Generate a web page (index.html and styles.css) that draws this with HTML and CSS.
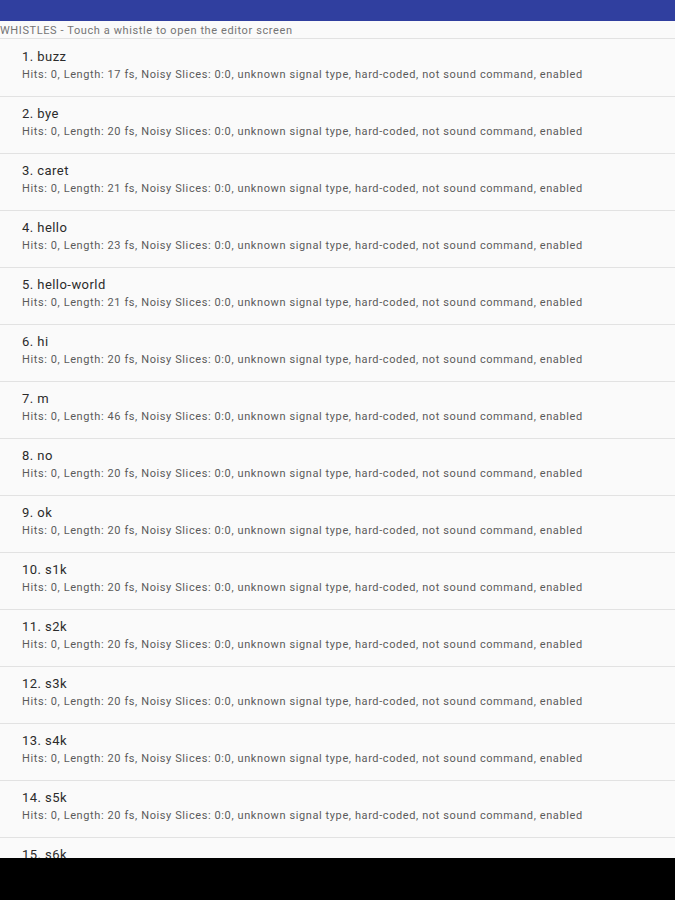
FILE: index.html
```html
<!DOCTYPE html>
<html lang="en">
<head>
    <meta charset="UTF-8">
    <meta name="viewport" content="width=device-width, initial-scale=1.0">
    <title>Whistles</title>
    <link rel="stylesheet" href="styles.css">
</head>
<body>
    <div class="screen">
        <div class="status-bar"></div>

        <div class="content">
            <div class="list-header">WHISTLES - Touch a whistle to open the editor screen</div>

            <ul class="whistle-list">
                <li class="whistle">
                    <div class="whistle-name">1. buzz</div>
                    <div class="whistle-info">Hits: 0, Length: 17 fs, Noisy Slices: 0:0, unknown signal type, hard-coded, not sound command, enabled</div>
                </li>
                <li class="whistle">
                    <div class="whistle-name">2. bye</div>
                    <div class="whistle-info">Hits: 0, Length: 20 fs, Noisy Slices: 0:0, unknown signal type, hard-coded, not sound command, enabled</div>
                </li>
                <li class="whistle">
                    <div class="whistle-name">3. caret</div>
                    <div class="whistle-info">Hits: 0, Length: 21 fs, Noisy Slices: 0:0, unknown signal type, hard-coded, not sound command, enabled</div>
                </li>
                <li class="whistle">
                    <div class="whistle-name">4. hello</div>
                    <div class="whistle-info">Hits: 0, Length: 23 fs, Noisy Slices: 0:0, unknown signal type, hard-coded, not sound command, enabled</div>
                </li>
                <li class="whistle">
                    <div class="whistle-name">5. hello-world</div>
                    <div class="whistle-info">Hits: 0, Length: 21 fs, Noisy Slices: 0:0, unknown signal type, hard-coded, not sound command, enabled</div>
                </li>
                <li class="whistle">
                    <div class="whistle-name">6. hi</div>
                    <div class="whistle-info">Hits: 0, Length: 20 fs, Noisy Slices: 0:0, unknown signal type, hard-coded, not sound command, enabled</div>
                </li>
                <li class="whistle">
                    <div class="whistle-name">7. m</div>
                    <div class="whistle-info">Hits: 0, Length: 46 fs, Noisy Slices: 0:0, unknown signal type, hard-coded, not sound command, enabled</div>
                </li>
                <li class="whistle">
                    <div class="whistle-name">8. no</div>
                    <div class="whistle-info">Hits: 0, Length: 20 fs, Noisy Slices: 0:0, unknown signal type, hard-coded, not sound command, enabled</div>
                </li>
                <li class="whistle">
                    <div class="whistle-name">9. ok</div>
                    <div class="whistle-info">Hits: 0, Length: 20 fs, Noisy Slices: 0:0, unknown signal type, hard-coded, not sound command, enabled</div>
                </li>
                <li class="whistle">
                    <div class="whistle-name">10. s1k</div>
                    <div class="whistle-info">Hits: 0, Length: 20 fs, Noisy Slices: 0:0, unknown signal type, hard-coded, not sound command, enabled</div>
                </li>
                <li class="whistle">
                    <div class="whistle-name">11. s2k</div>
                    <div class="whistle-info">Hits: 0, Length: 20 fs, Noisy Slices: 0:0, unknown signal type, hard-coded, not sound command, enabled</div>
                </li>
                <li class="whistle">
                    <div class="whistle-name">12. s3k</div>
                    <div class="whistle-info">Hits: 0, Length: 20 fs, Noisy Slices: 0:0, unknown signal type, hard-coded, not sound command, enabled</div>
                </li>
                <li class="whistle">
                    <div class="whistle-name">13. s4k</div>
                    <div class="whistle-info">Hits: 0, Length: 20 fs, Noisy Slices: 0:0, unknown signal type, hard-coded, not sound command, enabled</div>
                </li>
                <li class="whistle">
                    <div class="whistle-name">14. s5k</div>
                    <div class="whistle-info">Hits: 0, Length: 20 fs, Noisy Slices: 0:0, unknown signal type, hard-coded, not sound command, enabled</div>
                </li>
                <li class="whistle">
                    <div class="whistle-name">15. s6k</div>
                    <div class="whistle-info">Hits: 0, Length: 20 fs, Noisy Slices: 0:0, unknown signal type, hard-coded, not sound command, enabled</div>
                </li>
            </ul>
        </div>

        <div class="nav-bar"></div>
    </div>
</body>
</html>
```

FILE: styles.css
```css
* {
    margin: 0;
    padding: 0;
    box-sizing: border-box;
}

body {
    font-family: Roboto, 'Noto Sans', sans-serif;
    background: #fafafa;
    color: #333333;
}

.screen {
    display: flex;
    flex-direction: column;
    height: 900px;
    overflow: hidden;
}

.status-bar {
    height: 21px;
    background: #303f9f;
    flex-shrink: 0;
}

.content {
    flex: 1;
    overflow: hidden;
    background: #fafafa;
}

.list-header {
    height: 18px;
    padding-top: 2px;
    font-size: 11px;
    line-height: 16px;
    letter-spacing: 0.6px;
    color: #757575;
    border-bottom: 1px solid #e2e2e2;
    white-space: nowrap;
}

.whistle-list {
    list-style: none;
}

.whistle {
    height: 57px;
    padding: 9px 22px 0;
    border-bottom: 1px solid #e2e2e2;
}

.whistle:first-child {
    height: 58px;
    padding-top: 10px;
}

.whistle-name {
    font-size: 13px;
    line-height: 16px;
    letter-spacing: 0.45px;
    color: #2b2b2b;
}

.whistle-info {
    margin-top: 1px;
    font-size: 11px;
    line-height: 17px;
    letter-spacing: 0.6px;
    color: #5a5a5a;
    white-space: nowrap;
}

.nav-bar {
    height: 42px;
    background: #000000;
    flex-shrink: 0;
}
```
